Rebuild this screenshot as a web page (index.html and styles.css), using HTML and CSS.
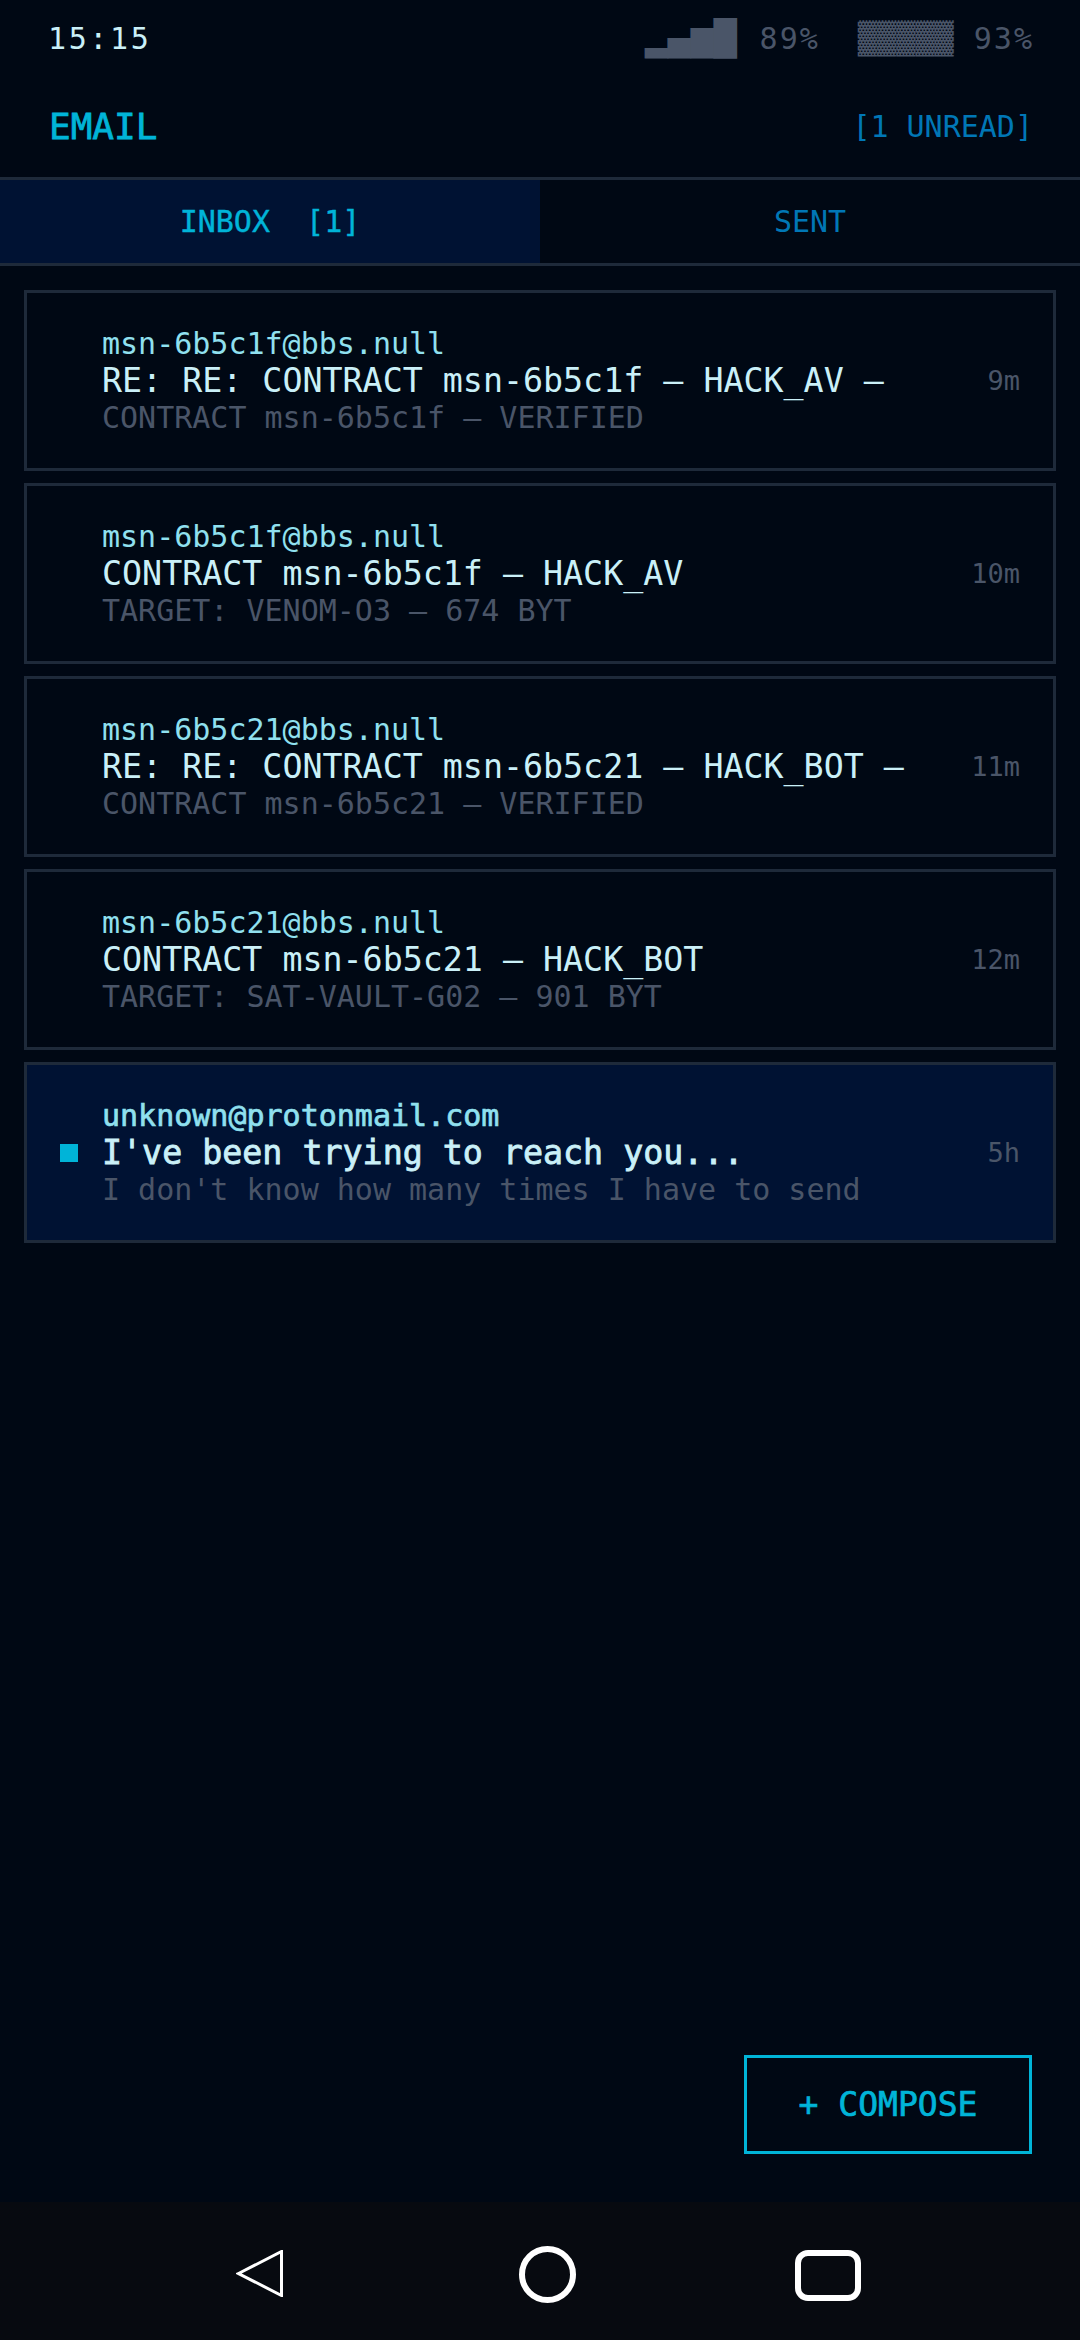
FILE: index.html
```html
<!DOCTYPE html>
<html>
<head>
  <title>Email</title>
  <link rel="stylesheet" href="styles.css">
</head>
<body>
  <div class="status">
    <span class="clock">15:15</span>
    <span class="levels">
      <span class="signal">▂▄▆█</span>
      <span class="pct">89%</span>
      <span class="battery">▓▓▓▓▓</span>
      <span class="pct">93%</span>
    </span>
  </div>

  <div class="header">
    <span class="title">EMAIL</span>
    <span class="unread">[1 UNREAD]</span>
  </div>

  <div class="tabs">
    <div class="tab active">INBOX&nbsp;&nbsp;[1]</div>
    <div class="tab">SENT</div>
  </div>

  <div class="list">
    <div class="mail">
      <div class="dot"></div>
      <div class="body">
        <div class="from">msn-6b5c1f@bbs.null</div>
        <div class="subject">RE: RE: CONTRACT msn-6b5c1f — HACK_AV —</div>
        <div class="preview">CONTRACT msn-6b5c1f — VERIFIED</div>
      </div>
      <div class="age">9m</div>
    </div>
    <div class="mail">
      <div class="dot"></div>
      <div class="body">
        <div class="from">msn-6b5c1f@bbs.null</div>
        <div class="subject">CONTRACT msn-6b5c1f — HACK_AV</div>
        <div class="preview">TARGET: VENOM-O3 — 674 BYT</div>
      </div>
      <div class="age">10m</div>
    </div>
    <div class="mail">
      <div class="dot"></div>
      <div class="body">
        <div class="from">msn-6b5c21@bbs.null</div>
        <div class="subject">RE: RE: CONTRACT msn-6b5c21 — HACK_BOT —</div>
        <div class="preview">CONTRACT msn-6b5c21 — VERIFIED</div>
      </div>
      <div class="age">11m</div>
    </div>
    <div class="mail">
      <div class="dot"></div>
      <div class="body">
        <div class="from">msn-6b5c21@bbs.null</div>
        <div class="subject">CONTRACT msn-6b5c21 — HACK_BOT</div>
        <div class="preview">TARGET: SAT-VAULT-G02 — 901 BYT</div>
      </div>
      <div class="age">12m</div>
    </div>
    <div class="mail new">
      <div class="dot"></div>
      <div class="body">
        <div class="from">unknown@protonmail.com</div>
        <div class="subject">I've been trying to reach you...</div>
        <div class="preview">I don't know how many times I have to send</div>
      </div>
      <div class="age">5h</div>
    </div>
  </div>

  <div class="actions">
    <div class="compose">+ COMPOSE</div>
  </div>

  <div class="nav">
    <svg class="nav-back" width="47" height="47" viewBox="0 0 47 47"><path d="M2.5 23.5 L45.5 1.5 V45.5 Z" fill="none" stroke="#fff" stroke-width="3"/></svg>
    <svg class="nav-home" width="57" height="57" viewBox="0 0 57 57"><circle cx="28.5" cy="28.5" r="25.5" fill="none" stroke="#fff" stroke-width="6"/></svg>
    <svg class="nav-recent" width="66" height="51" viewBox="0 0 66 51"><rect x="3" y="3" width="60" height="45" rx="10" fill="none" stroke="#fff" stroke-width="6"/></svg>
  </div>
</body>
</html>
```

FILE: styles.css
```css
html, body { margin: 0; padding: 0; }
body {
  width: 1080px;
  height: 2340px;
  display: flex;
  flex-direction: column;
  background: #000814;
  font-family: "DejaVu Sans Mono", monospace;
  overflow: hidden;
}

.status { height: 76px; display: flex; justify-content: space-between; align-items: center; padding: 0 46px 0 48px; }
.clock { font-size: 30px; letter-spacing: 2.6px; color: #caf0f8; }
.levels { display: flex; align-items: center; color: #4a5568; font-size: 30px; }
.signal { font-size: 34.4px; margin-right: 3px; transform: scaleX(1.11); transform-origin: right; }
.pct { letter-spacing: 2px; margin-left: 20px; }
.battery { font-family: "Liberation Mono", monospace; font-size: 32px; margin-left: 38px; }

.header { height: 101px; display: flex; justify-content: space-between; align-items: center; padding: 0 47px 0 49px; border-bottom: 3px solid #1e2a3a; }
.title { font-size: 36px; -webkit-text-stroke: 0.8px #00b4d8; color: #00b4d8; }
.unread { font-size: 30px; color: #0077b6; }

.tabs { display: flex; height: 83px; border-bottom: 3px solid #1e2a3a; }
.tab { flex: 1; display: flex; align-items: center; justify-content: center; font-size: 30px; color: #0077b6; }
.tab.active { background: #001233; color: #00b4d8; -webkit-text-stroke: 0.4px #00b4d8; }

.list { flex: 1; display: flex; flex-direction: column; gap: 12px; padding: 24px 24px 0; }
.mail { height: 181px; box-sizing: border-box; display: flex; align-items: center; border: 3px solid #1e2a3a; padding: 0 33px 0 33px; }
.mail.new { background: #001233; }
.dot { width: 18px; height: 18px; margin-right: 24px; flex: none; }
.new .dot { background: #00b4d8; }
.body { flex: 1; min-width: 0; white-space: nowrap; }
.from { font-size: 30px; line-height: 36px; color: #90e0ef; }
.subject { font-size: 33.3px; line-height: 38px; color: #caf0f8; }
.preview { font-size: 30px; line-height: 36px; color: #4a5568; }
.new .from { -webkit-text-stroke: 0.7px #90e0ef; }
.new .subject { -webkit-text-stroke: 0.8px #caf0f8; }
.age { font-size: 27px; color: #4a5568; }

.actions { display: flex; justify-content: flex-end; padding: 0 48px 48px; }
.compose { width: 288px; height: 99px; box-sizing: border-box; display: flex; align-items: center; justify-content: center; border: 3px solid #00b4d8; font-size: 33px; -webkit-text-stroke: 0.7px #00b4d8; color: #00b4d8; }

.nav { height: 138px; flex: none; background: #070a10; position: relative; }
.nav svg { position: absolute; }
.nav-back { left: 236px; top: 48px; }
.nav-home { left: 519px; top: 44px; }
.nav-recent { left: 795px; top: 48px; }
```
